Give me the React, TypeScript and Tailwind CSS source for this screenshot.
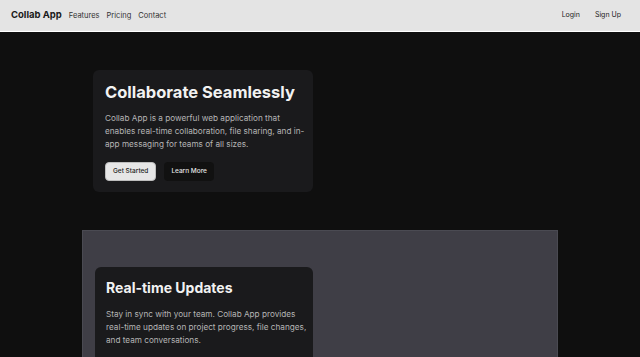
import React from 'react';

const font = { fontFamily: 'Inter, "Noto Sans", sans-serif' };

const Header: React.FC = () => (
  <header className="flex h-8 items-center justify-between border-b border-white bg-[#e4e4e4] px-[11px] text-[#1a1a1a]">
    <div className="flex items-center gap-[7px]">
      <span className="text-[9.5px] font-bold">Collab App</span>
      <nav className="flex items-center gap-[7px] text-[7.5px] text-[#333]">
        <a href="#">Features</a>
        <a href="#">Pricing</a>
        <a href="#">Contact</a>
      </nav>
    </div>
    <div className="mr-[8px] flex items-center gap-[15px] text-[7px] text-[#222]">
      <a href="#">Login</a>
      <a href="#">Sign Up</a>
    </div>
  </header>
);

const App: React.FC = () => {
  return (
    <div className="h-[357px] overflow-hidden bg-[#0f0f0f]" style={font}>
      <Header />
      <main className="pt-[38px]">
        <div className="ml-[93px] w-[220px] rounded-md bg-[#1a1a1c] pt-[10px] pr-[5px] pb-[11px] pl-3">
          <h1 className="whitespace-nowrap text-[16.5px] font-bold leading-6 text-[#f2f2f2]">Collaborate Seamlessly</h1>
          <p className="mt-[8px] text-[8.2px] leading-[13px] text-[#b5b5b5]">
            Collab App is a powerful web application that enables real-time collaboration, file sharing, and in-app messaging for teams of all sizes.
          </p>
          <div className="mt-[11px] flex gap-2">
            <button className="h-[19px] rounded-sm border border-[#bdbdbd] bg-[#e6e6e6] px-[7px] text-[6.5px] font-medium text-[#222]">Get Started</button>
            <button className="h-[19px] rounded-sm bg-[#111] px-[7px] text-[6.5px] font-medium text-[#e5e5e5]">Learn More</button>
          </div>
        </div>

        <section className="mt-[38px] ml-[82px] w-[476px] border border-[#4a4a52] bg-[#3f3e46] px-3 pt-[36px] pb-6">
          <div className="w-[218px] rounded-md bg-[#1a1a1c] pt-[9px] pr-[5px] pb-3 pl-[11px]">
            <h2 className="text-[14px] font-bold leading-6 text-[#f2f2f2]">Real-time Updates</h2>
            <p className="mt-[8px] text-[8.2px] leading-[13px] text-[#b5b5b5]">
              Stay in sync with your team. Collab App provides real-time updates on project progress, file changes, and team conversations.
            </p>
            <div className="mt-[11px] flex gap-2">
              <button className="h-[19px] rounded-sm border border-[#bdbdbd] bg-[#e6e6e6] px-[7px] text-[6.5px] font-medium text-[#222]">Learn More</button>
            </div>
          </div>
        </section>
      </main>
    </div>
  );
};

export default App;
